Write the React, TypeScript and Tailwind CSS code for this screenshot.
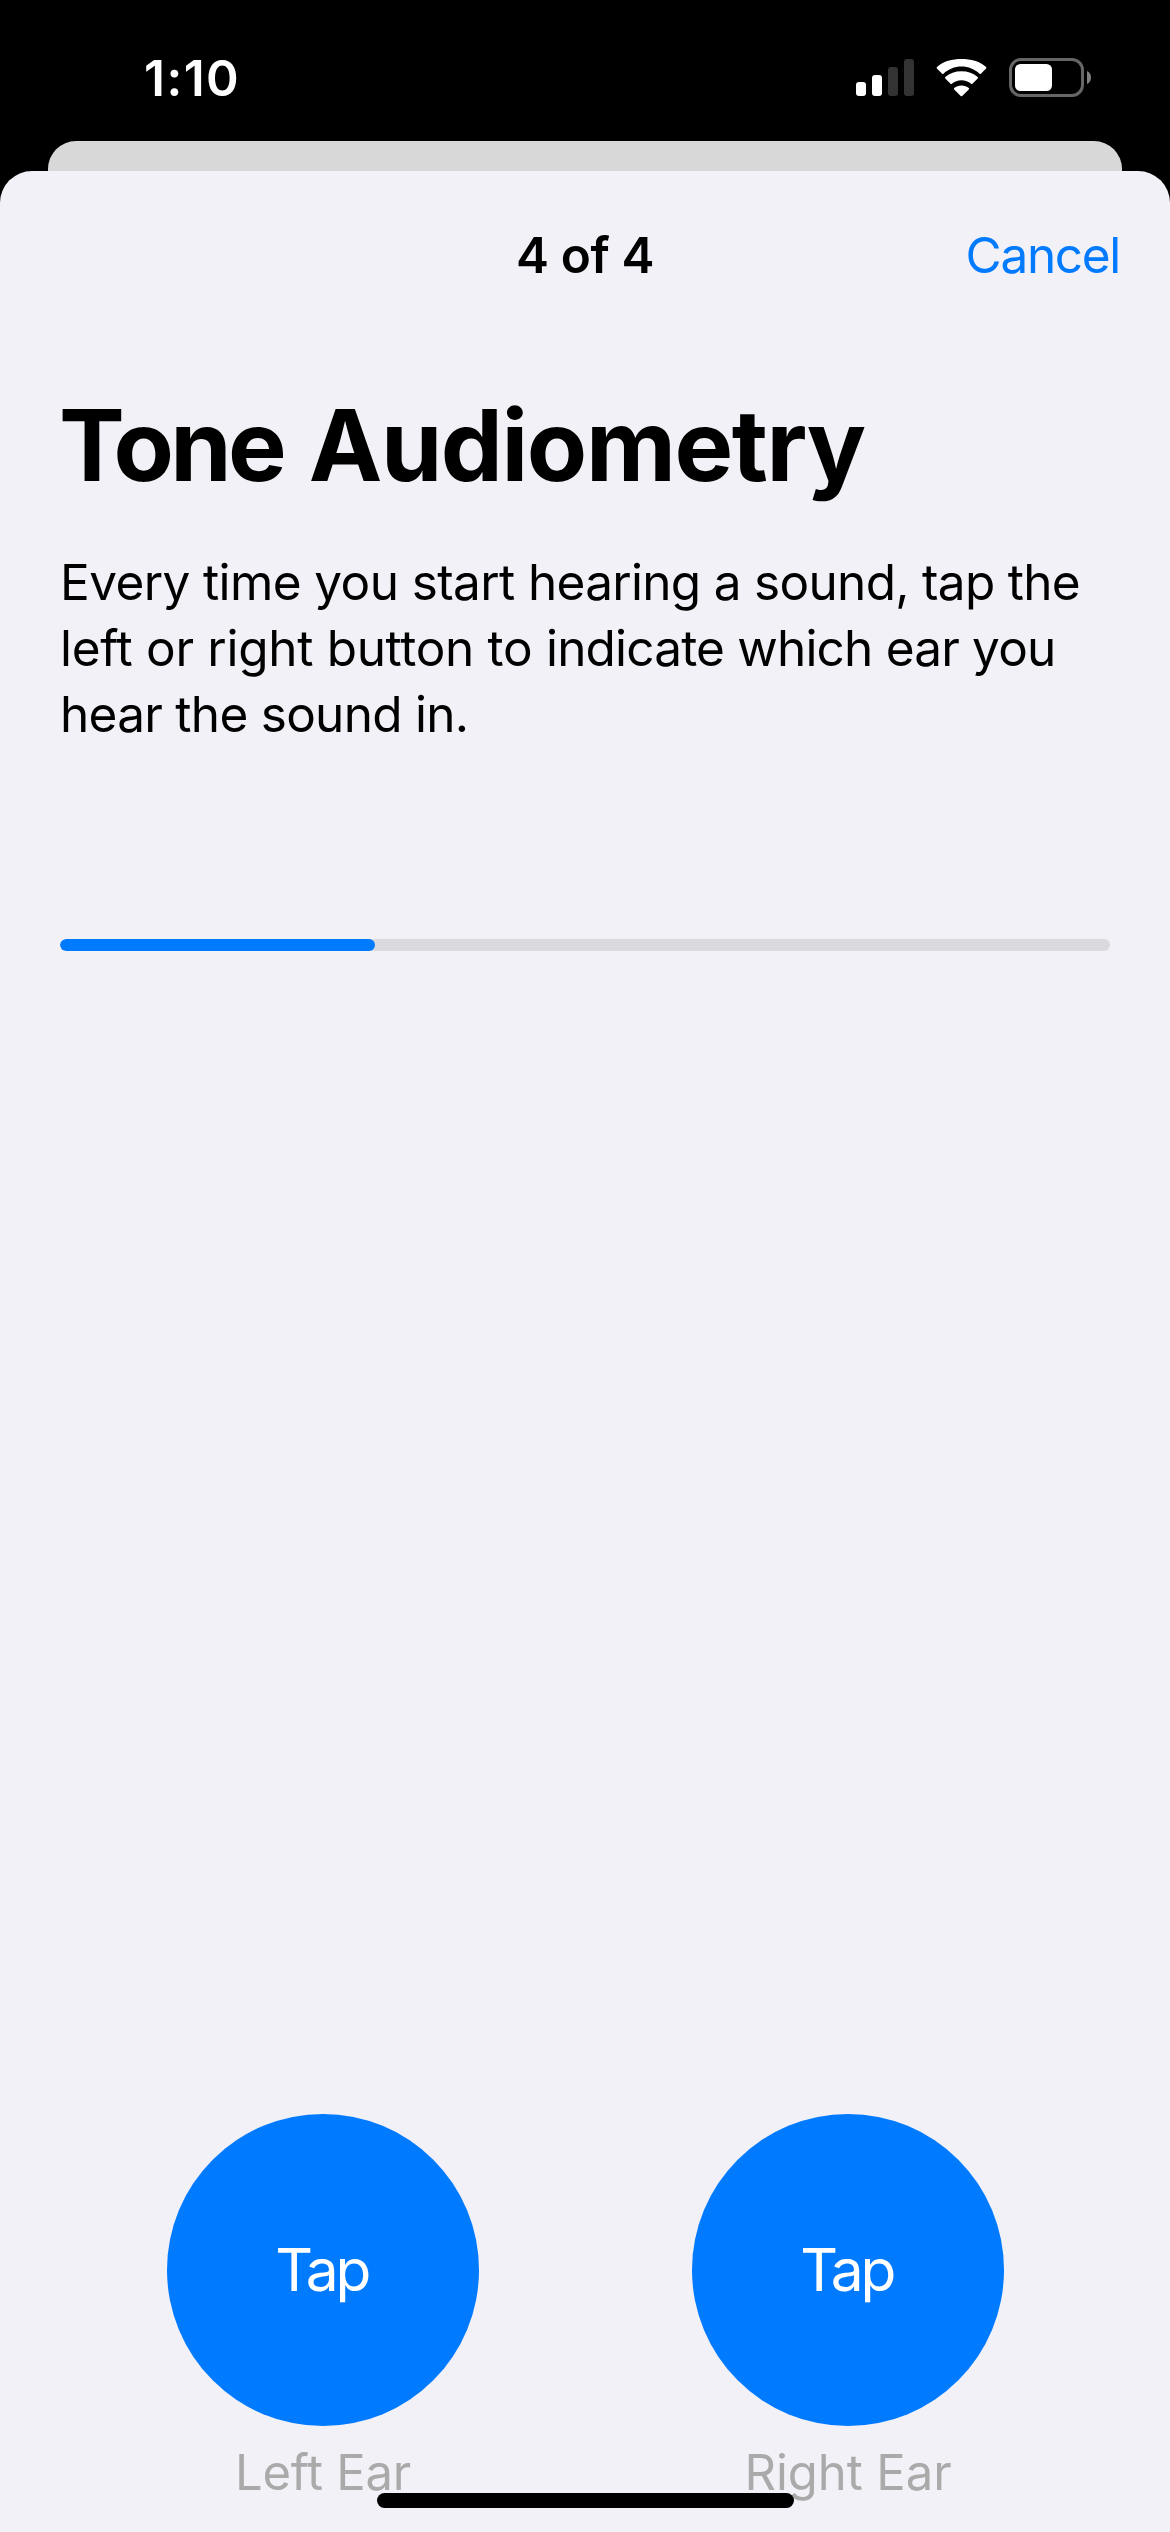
const signalBars = [
  "h-[14px] bg-white",
  "h-[21px] bg-white",
  "h-[29px] bg-[#333333]",
  "h-[37px] bg-[#333333]",
];

function SignalIcon() {
  return (
    <div className="flex h-[37px] items-end gap-[6px]">
      {signalBars.map((bar) => (
        <span key={bar} className={`w-[10px] rounded-[3px] ${bar}`} />
      ))}
    </div>
  );
}

function WifiIcon() {
  return (
    <svg width="51" height="38" viewBox="0 0 51 38" fill="#fff" className="ml-[22px]">
      <path d="M25.5 7.6c6.9 0 13.3 2.7 18 7.2.4.4 1 .4 1.4 0l5.2-5.3c.4-.4.4-1 0-1.400C43.5 1.800 34.7 0 25.5 0S7.500 1.800.9 8.100c-.4.4-.4 1 0 1.400l5.2 5.300c.4.400 1 .4 1.400 0 4.700-4.500 11.100-7.200 18-7.200z" />
      <path d="M25.5 21.200c3.700 0 7 1.300 9.600 3.500.4.400 1 .4 1.400 0l5.200-5.200c.4-.4.4-1.100 0-1.400-4.300-3.900-9.900-5.900-16.200-5.900s-11.900 2-16.200 5.900c-.4.400-.4 1 0 1.400l5.200 5.200c.4.400 1 .4 1.400 0 2.600-2.200 5.900-3.500 9.600-3.500z" />
      <path d="M32.800 30.400c.4-.4.4-1.100 0-1.400-2-1.600-4.500-2.500-7.300-2.500s-5.300.9-7.300 2.500c-.4.400-.4 1 0 1.400l6.500 6.500c.4.400 1.100.4 1.500 0l6.600-6.500z" />
    </svg>
  );
}

function BatteryIcon() {
  return (
    <svg width="83" height="39" viewBox="0 0 83 39" className="ml-[22px]">
      <rect x="1.5" y="1.5" width="72" height="36" rx="10.5" fill="none" stroke="#666666" strokeWidth="3" />
      <rect x="6" y="6" width="37" height="27" rx="5.5" fill="#fff" />
      <path d="M78 13c2.500 1 4 3.500 4 6.500s-1.500 5.500-4 6.500z" fill="#808080" />
    </svg>
  );
}

function EarButton({ label, labelClass }: { label: string; labelClass: string }) {
  return (
    <div className="flex w-[312px] flex-col items-center">
      <button className="flex size-[312px] items-center justify-center rounded-full bg-[#007aff] text-white">
        <span className="mr-[2.6px] mb-[1px] text-[58.6px] leading-[71px] tracking-[-3.2px]">Tap</span>
      </button>
      <span className={`mt-[17px] whitespace-nowrap text-[49px] leading-[59px] text-[#aaaaaa] ${labelClass}`}>
        {label}
      </span>
    </div>
  );
}

export default function App() {
  return (
    <div className="relative flex h-[2532px] w-[1170px] flex-col overflow-hidden bg-black font-['Inter',sans-serif] text-black">
      <header className="flex h-[141px] shrink-0 justify-between pl-[144px] pr-[78px] text-white">
        <span className="mt-[48px] text-[49.5px] font-semibold leading-[60px] tracking-[1.47px]">1:10</span>
        <div className="mt-[58px] flex h-[39px] items-center">
          <SignalIcon />
          <WifiIcon />
          <BatteryIcon />
        </div>
      </header>

      <div className="mx-[48px] h-[30px] shrink-0 rounded-t-[28px] bg-[#d8d8d8]" />

      <main className="flex flex-1 flex-col rounded-t-[32px] bg-[#f2f1f7]">
        <nav className="mt-[54px] grid h-[60px] grid-cols-3 items-center px-[50px] text-[49.5px] leading-[60px]">
          <h2 className="col-start-2 text-center font-semibold tracking-[-0.36px]">4 of 4</h2>
          <button className="justify-self-end tracking-[-1.32px] text-[#007aff]">Cancel</button>
        </nav>

        <section className="px-[60px]">
          <h1 className="mt-[100px] ml-[-1px] whitespace-nowrap text-[98.6px] font-bold leading-[120px]">
            <span className="tracking-[-3.67px] [word-spacing:6px]">Tone </span>
            <span className="tracking-[-1.42px]">Audiometry</span>
          </h1>
          <p className="mt-[44px] whitespace-nowrap text-[49.5px] leading-[66px]">
            <span className="tracking-[-0.6px]">Every time you start </span>
            <span className="tracking-[-0.69px]">hearing a sound, tap the</span>
            <br />
            <span className="tracking-[-0.31px]">left or right button to </span>
            <span className="tracking-[-0.81px]">indicate which ear you</span>
            <br />
            <span className="tracking-[-0.72px]">hear the sound in.</span>
          </p>
          <div className="mt-[192px] h-[12px] overflow-hidden rounded-full bg-[#d9d9de]">
            <div className="h-full w-[30%] rounded-full bg-[#007aff]" />
          </div>
        </section>

        <section className="mt-auto flex h-[418px] justify-between pl-[167px] pr-[166px]">
          <EarButton label="Left Ear" labelClass="tracking-[-0.26px]" />
          <EarButton label="Right Ear" labelClass="tracking-[-0.07px]" />
        </section>
      </main>

      <div className="absolute bottom-[24px] left-[377px] h-[15px] w-[417px] rounded-full bg-black" />
    </div>
  );
}
